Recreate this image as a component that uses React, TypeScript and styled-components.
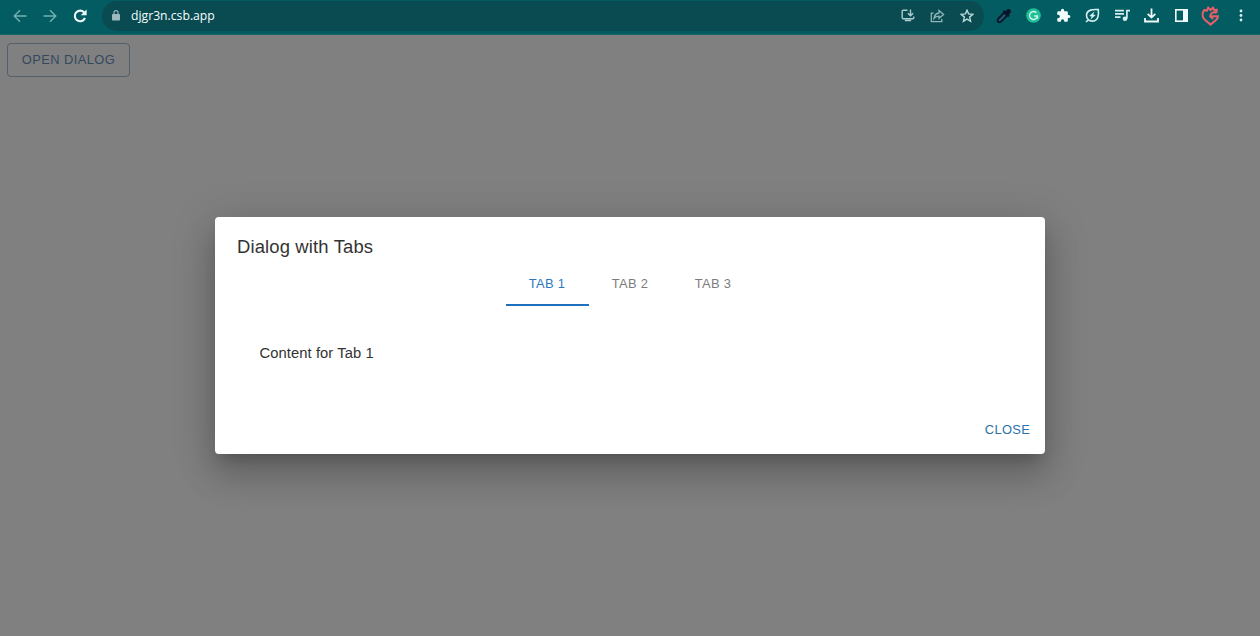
import React, { useState } from 'react';
import styled, { createGlobalStyle } from 'styled-components';

const GlobalStyle = createGlobalStyle`
  * { box-sizing: border-box; }
  body { margin: 0; font-family: "Liberation Sans", Arial, sans-serif; }
`;

const Window = styled.div`
  display: flex;
  flex-direction: column;
  height: 636px;
  overflow: hidden;
`;

const BrowserBar = styled.header`
  display: flex;
  align-items: center;
  flex: none;
  height: 35px;
  padding: 0 4px 3px 8px;
  background: #035c61;
  border-bottom: 1px solid #146568;
`;

const NavGroup = styled.nav`
  display: flex;
  align-items: center;
  flex: none;
  width: 94px;
`;

const ToolButton = styled.button<{ $w: number; $color?: string }>`
  display: flex;
  align-items: center;
  justify-content: center;
  flex: none;
  width: ${(p) => p.$w}px;
  height: 30px;
  padding: 0;
  border: 0;
  background: none;
  color: ${(p) => p.$color ?? '#f2fbfb'};
`;

const AddressBar = styled.div`
  display: flex;
  align-items: center;
  flex: none;
  width: 882px;
  height: 30px;
  padding: 0 2px 0 6px;
  border-radius: 15px;
  background: #0a4a51;
`;

const Url = styled.span`
  flex: 1;
  padding-left: 7px;
  font: 500 12.2px "Open Sans", "Noto Sans", sans-serif;
  color: #f4ffff;
`;

const Extensions = styled.div`
  display: flex;
  align-items: center;
  flex: none;
  padding-left: 5.5px;
`;

const Page = styled.main`
  display: flex;
  flex-direction: column;
  flex: 1;
  padding: 8px 7px;
  background: #808080;
  position: relative;
`;

const OpenButton = styled.button`
  align-self: flex-start;
  width: 123px;
  height: 34px;
  padding: 0;
  border: 1px solid #525f6c;
  border-radius: 4px;
  background: none;
  font: 12.9px/22px "Liberation Sans", Arial, sans-serif;
  letter-spacing: 0.42px;
  color: #34495f;
`;

const Overlay = styled.div`
  position: absolute;
  inset: 0;
  display: flex;
  align-items: center;
  justify-content: center;
`;

const Dialog = styled.section`
  display: flex;
  flex-direction: column;
  width: 830px;
  height: 237px;
  border-radius: 4px;
  background: #fff;
  box-shadow:
    0 10px 14px -6px rgba(0, 0, 0, 0.2),
    0 22px 35px 3px rgba(0, 0, 0, 0.14),
    0 8px 42px 7px rgba(0, 0, 0, 0.12);
`;

const DialogTitle = styled.h2`
  margin: 0;
  padding: 15px 22px 0;
  font-size: 18.45px;
  font-weight: 400;
  line-height: 29px;
  letter-spacing: 0.14px;
  color: #333;
`;

const TabList = styled.div`
  display: flex;
  justify-content: center;
  height: 45px;
`;

const Tab = styled.button<{ $active: boolean }>`
  width: 83px;
  padding: 2px 0 0;
  border: 0;
  border-bottom: 2px solid ${(p) => (p.$active ? '#1f70bd' : 'transparent')};
  background: none;
  font: 12.9px/16px "Liberation Sans", Arial, sans-serif;
  letter-spacing: 0.37px;
  color: ${(p) => (p.$active ? '#2c78bd' : '#7c7c7c')};
`;

const TabPanel = styled.p`
  flex: 1;
  margin: 0;
  padding: 36px 44.5px 0;
  font-size: 14.75px;
  line-height: 22px;
  letter-spacing: 0.08px;
  color: #333;
`;

const DialogActions = styled.footer`
  display: flex;
  justify-content: flex-end;
  padding: 7px 7.5px 7px;
`;

const CloseButton = styled.button`
  width: 60px;
  height: 34px;
  padding: 0;
  border: 0;
  background: none;
  font: 12.9px/22px "Liberation Sans", Arial, sans-serif;
  letter-spacing: 0.37px;
  color: #2c71ab;
`;

const Icon = styled.svg<{ $stroke?: number }>`
  display: block;
  fill: none;
  stroke: currentColor;
  stroke-width: ${(p) => p.$stroke ?? 1.4};
`;

const BackIcon = () => (
  <Icon width="14" height="14" viewBox="0 0 14 14"><path d="M13.5 7H1.5M7 1.2 1.2 7 7 12.8" /></Icon>
);
const ForwardIcon = () => (
  <Icon width="14" height="14" viewBox="0 0 14 14"><path d="M.5 7h12M7 1.2 12.8 7 7 12.8" /></Icon>
);
const ReloadIcon = () => (
  <Icon $stroke={2.1} width="14" height="14" viewBox="0 0 14 14">
    <path d="M12 9a5.3 5.3 0 1 1-1-5.7L12 4.3" />
    <path fill="currentColor" stroke="none" d="M13.6.4v5.9H7.7z" />
  </Icon>
);
const LockIcon = () => (
  <Icon $stroke={1.1} width="8" height="11" viewBox="0 0 8 11">
    <rect x="0" y="4" width="8" height="6.6" rx=".8" fill="currentColor" stroke="none" />
    <path d="M2 4.5V2.6a2 2 0 0 1 4 0v1.9" />
  </Icon>
);
const InstallIcon = () => (
  <Icon width="14" height="13" viewBox="0 0 14 13">
    <path d="M6.5 1.2H2.2a1 1 0 0 0-1 1v6.6a1 1 0 0 0 1 1h9.6a1 1 0 0 0 1-1V7.4M9.5.5v6M6.9 4.2l2.6 2.6 2.6-2.6M3.8 11.5h6.4" />
  </Icon>
);
const ShareIcon = () => (
  <Icon $stroke={1.3} width="15" height="14" viewBox="0 0 15 14">
    <path d="M3.6 4.2H1.3v8.5h10.5v-2.6M9 1.5l4.6 3.9L9 9.3V7.1c-2.2 0-3.8.7-5 2.3.4-3 2-5 5-5.4z" />
  </Icon>
);
const StarIcon = () => (
  <Icon width="14" height="14" viewBox="0 0 14 14">
    <path d="m7 1.2 1.6 3.7 4.2.4-3.2 2.8 1 4.2L7 10.1l-3.6 2.2 1-4.2-3.2-2.8 4.2-.4z" />
  </Icon>
);
const PickerIcon = () => (
  <Icon $stroke={1.8} width="16" height="16" viewBox="0 0 16 16">
    <path d="M8.2 4.6 11.2 7.6 5.2 13.6Q3.5 14.7 2.2 14L1.7 13.4Q1.2 12 2.3 10.5z" fill="#20566b" />
    <path d="M6.8 3.5 8.4 2.2l1.3.9L11.3 1.5c2-1.6 4.8 1 3.2 3.2l-1.5 1.6.8 1.4-1.4 1.4z" fill="currentColor" stroke="none" />
  </Icon>
);
const GrammarIcon = () => (
  <Icon width="15" height="15" viewBox="0 0 15 15">
    <circle cx="7.5" cy="7.5" r="7.3" fill="#1fbf97" stroke="none" />
    <path stroke="#d0f8ea" d="M10.4 4.7A4 4 0 1 0 11.500 8H8.2M11.500 8v2.700" />
  </Icon>
);
const PuzzleIcon = () => (
  <Icon width="15" height="15" viewBox="0 0 24 24">
    <path fill="currentColor" stroke="none" d="M20.500 11H19V7a2 2 0 0 0-2-2h-4V3.500a2.500 2.500 0 0 0-5 0V5H4a2 2 0 0 0-2 2v3.800h1.500a2.700 2.700 0 0 1 0 5.400H2V20a2 2 0 0 0 2 2h3.800v-1.500a2.700 2.700 0 0 1 5.400 0V22H17a2 2 0 0 0 2-2v-4h1.500a2.500 2.500 0 0 0 0-5z" />
  </Icon>
);
const EnergyIcon = () => (
  <Icon $stroke={1.6} width="15" height="15" viewBox="0 0 15 15">
    <path d="M13.300 1.600c-4.800-.5-11.800-.1-11.800 6 0 3 2.600 5.500 5.600 5.500 6.500 0 6.700-6.700 6.200-11.500zM1 14l2.300-2.200" />
    <path fill="currentColor" stroke="none" d="M9.600 3.300 4.300 8l2.400.5-1.400 3.200 5.400-4.700-2.600-.5z" />
  </Icon>
);
const QueueIcon = () => (
  <Icon $stroke={1.7} width="15" height="13" viewBox="0 0 15 13">
    <path d="M0 1.700h9M0 4.900h9M0 8.100h5.500M11.900 9.500V1.700H15" />
    <circle cx="10" cy="9.700" r="2.300" fill="currentColor" stroke="none" />
  </Icon>
);
const DownloadIcon = () => (
  <Icon $stroke={1.8} width="15" height="15" viewBox="0 0 15 15">
    <path d="M7.500.5v8.800M3.700 5.800l3.800 3.800 3.800-3.800M1 10v3.500h13V10" />
  </Icon>
);
const SidePanelIcon = () => (
  <Icon $stroke={1.6} width="13" height="13" viewBox="0 0 13 13">
    <rect x=".8" y=".8" width="11.400" height="11.400" />
    <path fill="currentColor" stroke="none" d="M8 1h4.500v11H8z" />
  </Icon>
);
const ProfileIcon = () => (
  <Icon $stroke={2} width="19" height="20" viewBox="0 0 19 20">
    <path d="M15.600 6.700C12.500 5.500 9.200 7 9.200 10.200H17c-.1 1.400-.7 2.600-1.700 3.600L9.500 18.600l-5.900-5C.8 10.800 1 6.700 3.300 4L5.800 4.800 7.200 1.700 9.600 4 12 1.700 13.300 4.300 15.700 3.700V6.800M9.200 10.200l2.800 2.800" />
  </Icon>
);
const MoreIcon = () => (
  <Icon width="4" height="13" viewBox="0 0 4 13">
    <g fill="currentColor" stroke="none"><circle cx="2" cy="2" r="1.400" /><circle cx="2" cy="6.500" r="1.400" /><circle cx="2" cy="11" r="1.400" /></g>
  </Icon>
);

const tabs = ['Tab 1', 'Tab 2', 'Tab 3'];

export default function App() {
  const [active, setActive] = useState(0);
  const [open, setOpen] = useState(true);
  return (
    <Window>
      <GlobalStyle />
      <BrowserBar>
        <NavGroup>
          <ToolButton $w={24} $color="#73b0b2" aria-label="Back"><BackIcon /></ToolButton>
          <ToolButton $w={35} $color="#73b0b2" aria-label="Forward"><ForwardIcon /></ToolButton>
          <ToolButton $w={25} aria-label="Reload"><ReloadIcon /></ToolButton>
        </NavGroup>
        <AddressBar>
          <ToolButton $w={16} $color="#9bbabd" aria-label="Site information"><LockIcon /></ToolButton>
          <Url>djgr3n.csb.app</Url>
          <ToolButton $w={29} $color="#a9cbcd" aria-label="Install"><InstallIcon /></ToolButton>
          <ToolButton $w={30} $color="#8db8ba" aria-label="Share"><ShareIcon /></ToolButton>
          <ToolButton $w={30} $color="#b8dadb" aria-label="Bookmark"><StarIcon /></ToolButton>
        </AddressBar>
        <Extensions>
          <ToolButton $w={29} $color="#071429" aria-label="Colour picker"><PickerIcon /></ToolButton>
          <ToolButton $w={30} aria-label="Grammar"><GrammarIcon /></ToolButton>
          <ToolButton $w={29} aria-label="Extensions"><PuzzleIcon /></ToolButton>
          <ToolButton $w={30} $color="#d4eff0" aria-label="Energy saver"><EnergyIcon /></ToolButton>
          <ToolButton $w={29} $color="#d4eff0" aria-label="Media"><QueueIcon /></ToolButton>
          <ToolButton $w={30} aria-label="Downloads"><DownloadIcon /></ToolButton>
          <ToolButton $w={29} aria-label="Side panel"><SidePanelIcon /></ToolButton>
          <ToolButton $w={30} $color="#e85e6b" aria-label="Profile"><ProfileIcon /></ToolButton>
          <ToolButton $w={30} $color="#d4eff0" aria-label="More"><MoreIcon /></ToolButton>
        </Extensions>
      </BrowserBar>
      <Page>
        <OpenButton onClick={() => setOpen(true)}>OPEN DIALOG</OpenButton>
        {open && (
          <Overlay>
            <Dialog role="dialog">
              <DialogTitle>Dialog with Tabs</DialogTitle>
              <TabList role="tablist">
                {tabs.map((label, i) => (
                  <Tab key={label} role="tab" $active={i === active} onClick={() => setActive(i)}>
                    {label.toUpperCase()}
                  </Tab>
                ))}
              </TabList>
              <TabPanel>{`Content for ${tabs[active]}`}</TabPanel>
              <DialogActions>
                <CloseButton onClick={() => setOpen(false)}>CLOSE</CloseButton>
              </DialogActions>
            </Dialog>
          </Overlay>
        )}
      </Page>
    </Window>
  );
}
